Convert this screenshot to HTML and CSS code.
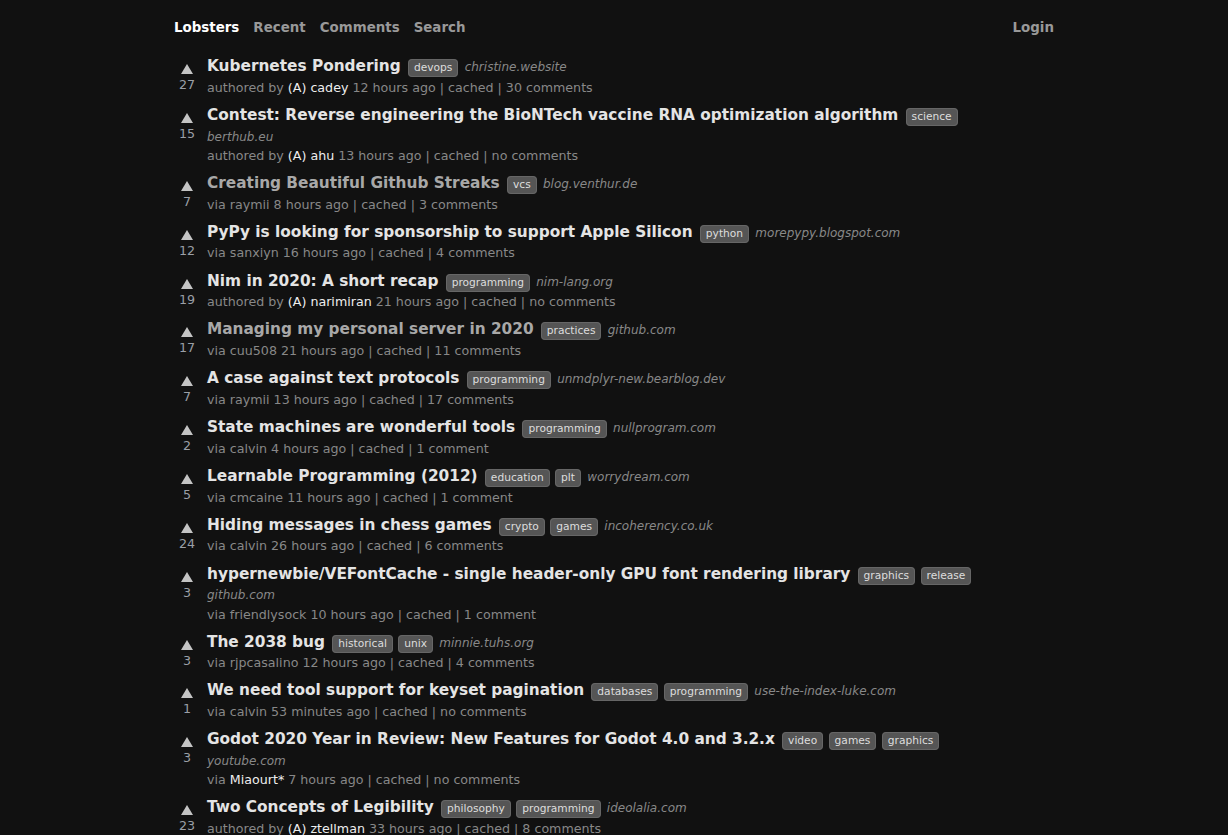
FILE: index.html
```html
<!DOCTYPE html>
<html lang="en">
<head>
<meta charset="utf-8">
<title>Lobsters</title>
<link rel="stylesheet" href="styles.css">
</head>
<body>
<div class="wrapper">
  <header class="nav">
    <nav class="nav-left">
      <a class="nav-item current" href="#">Lobsters</a>
      <a class="nav-item" href="#">Recent</a>
      <a class="nav-item" href="#">Comments</a>
      <a class="nav-item" href="#">Search</a>
    </nav>
    <a class="nav-item" href="#">Login</a>
  </header>

  <ol class="stories">
    <li class="story">
      <div class="voter"><span class="upvote"></span><span class="score">27</span></div>
      <div class="details">
        <div class="link-line"><a class="link" href="#">Kubernetes Pondering</a> <span class="tags"><a class="tag">devops</a></span> <a class="domain">christine.website</a></div>
        <div class="byline">authored by <a class="user">(A) cadey</a> 12 hours ago | cached | 30 comments</div>
      </div>
    </li>
    <li class="story">
      <div class="voter"><span class="upvote"></span><span class="score">15</span></div>
      <div class="details">
        <div class="link-line"><a class="link" href="#">Contest: Reverse engineering the BioNTech vaccine RNA optimization algorithm</a> <span class="tags"><a class="tag">science</a></span> <a class="domain">berthub.eu</a></div>
        <div class="byline">authored by <a class="user">(A) ahu</a> 13 hours ago | cached | no comments</div>
      </div>
    </li>
    <li class="story">
      <div class="voter"><span class="upvote"></span><span class="score">7</span></div>
      <div class="details">
        <div class="link-line"><a class="link visited" href="#">Creating Beautiful Github Streaks</a> <span class="tags"><a class="tag">vcs</a></span> <a class="domain">blog.venthur.de</a></div>
        <div class="byline">via raymii 8 hours ago | cached | 3 comments</div>
      </div>
    </li>
    <li class="story">
      <div class="voter"><span class="upvote"></span><span class="score">12</span></div>
      <div class="details">
        <div class="link-line"><a class="link" href="#">PyPy is looking for sponsorship to support Apple Silicon</a> <span class="tags"><a class="tag">python</a></span> <a class="domain">morepypy.blogspot.com</a></div>
        <div class="byline">via sanxiyn 16 hours ago | cached | 4 comments</div>
      </div>
    </li>
    <li class="story">
      <div class="voter"><span class="upvote"></span><span class="score">19</span></div>
      <div class="details">
        <div class="link-line"><a class="link" href="#">Nim in 2020: A short recap</a> <span class="tags"><a class="tag">programming</a></span> <a class="domain">nim-lang.org</a></div>
        <div class="byline">authored by <a class="user">(A) narimiran</a> 21 hours ago | cached | no comments</div>
      </div>
    </li>
    <li class="story">
      <div class="voter"><span class="upvote"></span><span class="score">17</span></div>
      <div class="details">
        <div class="link-line"><a class="link visited" href="#">Managing my personal server in 2020</a> <span class="tags"><a class="tag">practices</a></span> <a class="domain">github.com</a></div>
        <div class="byline">via cuu508 21 hours ago | cached | 11 comments</div>
      </div>
    </li>
    <li class="story">
      <div class="voter"><span class="upvote"></span><span class="score">7</span></div>
      <div class="details">
        <div class="link-line"><a class="link" href="#">A case against text protocols</a> <span class="tags"><a class="tag">programming</a></span> <a class="domain">unmdplyr-new.bearblog.dev</a></div>
        <div class="byline">via raymii 13 hours ago | cached | 17 comments</div>
      </div>
    </li>
    <li class="story">
      <div class="voter"><span class="upvote"></span><span class="score">2</span></div>
      <div class="details">
        <div class="link-line"><a class="link" href="#">State machines are wonderful tools</a> <span class="tags"><a class="tag">programming</a></span> <a class="domain">nullprogram.com</a></div>
        <div class="byline">via calvin 4 hours ago | cached | 1 comment</div>
      </div>
    </li>
    <li class="story">
      <div class="voter"><span class="upvote"></span><span class="score">5</span></div>
      <div class="details">
        <div class="link-line"><a class="link" href="#">Learnable Programming (2012)</a> <span class="tags"><a class="tag">education</a> <a class="tag">plt</a></span> <a class="domain">worrydream.com</a></div>
        <div class="byline">via cmcaine 11 hours ago | cached | 1 comment</div>
      </div>
    </li>
    <li class="story">
      <div class="voter"><span class="upvote"></span><span class="score">24</span></div>
      <div class="details">
        <div class="link-line"><a class="link" href="#">Hiding messages in chess games</a> <span class="tags"><a class="tag">crypto</a> <a class="tag">games</a></span> <a class="domain">incoherency.co.uk</a></div>
        <div class="byline">via calvin 26 hours ago | cached | 6 comments</div>
      </div>
    </li>
    <li class="story">
      <div class="voter"><span class="upvote"></span><span class="score">3</span></div>
      <div class="details">
        <div class="link-line"><a class="link" href="#">hypernewbie/VEFontCache - single header-only GPU font rendering library</a> <span class="tags"><a class="tag">graphics</a> <a class="tag">release</a></span> <a class="domain">github.com</a></div>
        <div class="byline">via friendlysock 10 hours ago | cached | 1 comment</div>
      </div>
    </li>
    <li class="story">
      <div class="voter"><span class="upvote"></span><span class="score">3</span></div>
      <div class="details">
        <div class="link-line"><a class="link" href="#">The 2038 bug</a> <span class="tags"><a class="tag">historical</a> <a class="tag">unix</a></span> <a class="domain">minnie.tuhs.org</a></div>
        <div class="byline">via rjpcasalino 12 hours ago | cached | 4 comments</div>
      </div>
    </li>
    <li class="story">
      <div class="voter"><span class="upvote"></span><span class="score">1</span></div>
      <div class="details">
        <div class="link-line"><a class="link" href="#">We need tool support for keyset pagination</a> <span class="tags"><a class="tag">databases</a> <a class="tag">programming</a></span> <a class="domain">use-the-index-luke.com</a></div>
        <div class="byline">via calvin 53 minutes ago | cached | no comments</div>
      </div>
    </li>
    <li class="story">
      <div class="voter"><span class="upvote"></span><span class="score">3</span></div>
      <div class="details">
        <div class="link-line"><a class="link" href="#">Godot 2020 Year in Review: New Features for Godot 4.0 and 3.2.x</a> <span class="tags"><a class="tag">video</a> <a class="tag">games</a> <a class="tag">graphics</a></span> <a class="domain">youtube.com</a></div>
        <div class="byline">via <a class="user">Miaourt*</a> 7 hours ago | cached | no comments</div>
      </div>
    </li>
    <li class="story">
      <div class="voter"><span class="upvote"></span><span class="score">23</span></div>
      <div class="details">
        <div class="link-line"><a class="link" href="#">Two Concepts of Legibility</a> <span class="tags"><a class="tag">philosophy</a> <a class="tag">programming</a></span> <a class="domain">ideolalia.com</a></div>
        <div class="byline">authored by <a class="user">(A) ztellman</a> 33 hours ago | cached | 8 comments</div>
      </div>
    </li>
  </ol>
</div>
</body>
</html>
```

FILE: styles.css
```css
html, body {
  margin: 0;
  padding: 0;
  background: #111111;
}

body {
  font-family: "DejaVu Sans", "Liberation Sans", sans-serif;
  font-size: 13.33px;
  line-height: 1.45;
  color: #dddddd;
}

a {
  text-decoration: none;
  color: inherit;
}

.wrapper {
  width: 880px;
  margin: 0 auto;
}

.nav {
  display: flex;
  justify-content: space-between;
  align-items: center;
  height: 54px;
  padding-top: 1px;
  font-weight: bold;
  font-size: 13.4px;
}

.nav-left {
  display: flex;
  gap: 14px;
}

.nav-item {
  color: #999999;
}

.nav-item.current {
  color: #ffffff;
}

.stories {
  list-style: none;
  margin: 1px 0 0;
  padding: 0;
}

.story {
  display: flex;
  margin-bottom: 7.08px;
}

.voter {
  width: 26px;
  margin-right: 7px;
  display: flex;
  flex-direction: column;
  align-items: center;
  padding-top: 8px;
}

.upvote {
  width: 0;
  height: 0;
  border-left: 6px solid transparent;
  border-right: 6px solid transparent;
  border-bottom: 10px solid #c4c4c4;
}

.score {
  font-size: 12.67px;
  line-height: 18px;
  margin-top: 2px;
  color: #9a9fa6;
}

.details {
  max-width: 785px;
}

.link-line {
  line-height: 19.25px;
}

.link {
  font-weight: bold;
  font-size: 15.33px;
  line-height: 21.75px;
  color: #e4e4e4;
}

.link.visited {
  color: #a8a8a8;
}

.tags {
  font-size: 10.67px;
  line-height: 1;
  margin-right: 2px;
}

.tag {
  background: #555555;
  border: 1px solid #666666;
  border-radius: 4px;
  color: #dddddd;
  padding: 1px 5px 2px;
  margin-left: 3px;
  line-height: 1;
}

.tag + .tag {
  margin-left: 2px;
}

.domain {
  font-style: italic;
  font-size: 12px;
  line-height: 16px;
  color: #888888;
}

.byline {
  font-size: 12.67px;
  line-height: 20px;
  color: #888888;
}

.user {
  color: #eeeeee;
}
```
